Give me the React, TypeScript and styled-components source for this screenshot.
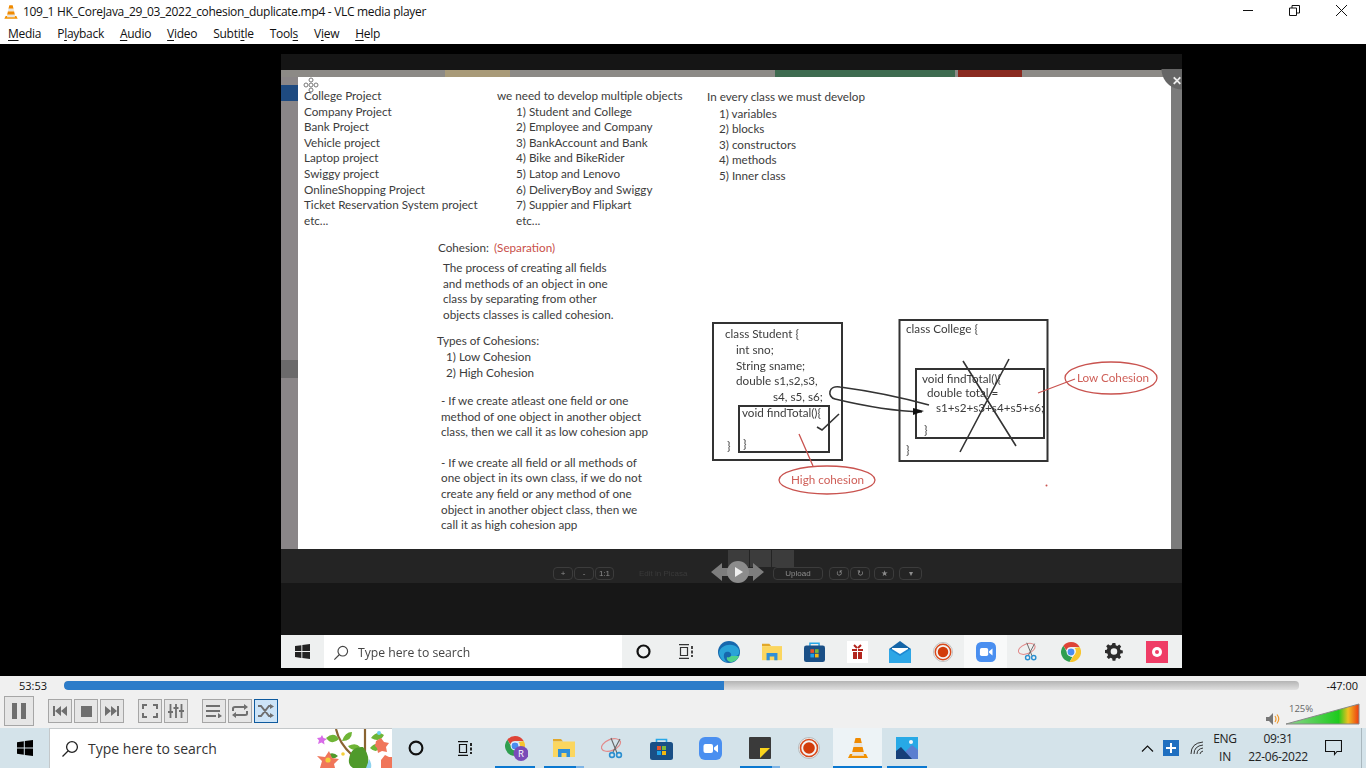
import React from "react";
import styled, { createGlobalStyle } from "styled-components";

const Global = createGlobalStyle`
  html, body { margin: 0; padding: 0; background: #000; }
  body { font-family: "Open Sans", "Noto Sans", sans-serif; overflow: hidden; }
  * { box-sizing: border-box; }
`;

const Page = styled.div`
  width: 1366px; height: 768px; display: flex; flex-direction: column; overflow: hidden;
`;
const TitleBar = styled.div`
  height: 23px; background: #fff; display: flex; align-items: center; padding-left: 3px; flex: none;
`;
const TitleText = styled.span`
  margin-left: 4px; font-size: 12px; color: #111; letter-spacing: -0.31px; white-space: nowrap;
`;
const WinButtons = styled.div`
  margin-left: auto; display: flex; align-items: center; height: 100%; padding-right: 18px; gap: 35px; margin-top: -3px;
`;
const MenuBar = styled.div`
  height: 21px; background: #fff; display: flex; align-items: center; padding-left: 8px; gap: 16px; flex: none;
`;
const MenuItem = styled.span`
  font-size: 12px; color: #111; white-space: nowrap; letter-spacing: -0.28px;
  u { text-underline-offset: 2px; }
`;
const VideoArea = styled.div`
  height: 632px; background: #000; flex: none; padding: 10px 0 0 281px;
`;
const Frame = styled.div`
  width: 901px; height: 614px; background: #171717; display: flex; flex-direction: column;
`;
const FrameTop = styled.div`height: 16px; background: #151515; flex: none;`;
const ShareStrip = styled.div`
  height: 7px; flex: none; display: flex; background: #8c8a86; filter: blur(0.6px);
`;
const ShareSeg = styled.div<{ $w: number; $c: string }>`
  width: ${p => p.$w}px; flex: none; background: ${p => p.$c};
`;
const SlideRow = styled.div`height: 472px; display: flex; flex: none; position: relative;`;
const LeftStrip = styled.div`
  width: 17px; flex: none; background: #8a8688; display: flex; flex-direction: column; filter: blur(0.4px);
`;
const StripBlue = styled.div`height: 16px; margin-top: 8px; background: #1e4a80; flex: none;`;
const StripDark = styled.div`height: 18px; margin-top: 259px; background: #6b6a6b; flex: none;`;
const RightStrip = styled.div`width: 11px; flex: none; background: #7b7b7b;`;
const Corner = styled.div`
  position: absolute; right: 0; top: -8px; width: 22px; height: 32px; color: #eee; font-size: 12px; font-weight: 700;
  background: radial-gradient(circle at 100% 0, #666 0 20px, transparent 21px);
  text-align: right; line-height: 24px; margin-right: 0; overflow: hidden;
`;
const Slide = styled.div`
  width: 873px; flex: none; background: #fff; padding: 11px 0 0 6px; color: #3c3c3c;
  font-family: "Lato", "Open Sans", sans-serif; font-size: 11.7px; line-height: 15.6px;
  filter: blur(0.45px); position: relative; display: flex; flex-direction: column;
`;
const Cursor = styled.svg`position: absolute; left: 5px; top: 0; `;
const TopRow = styled.div`display: flex; flex: none;`;
const Col = styled.div<{ $w: number; $t?: number }>`
  width: ${p => p.$w}px; flex: none; margin-top: ${p => p.$t ?? 0}px;
`;
const Line = styled.div<{ $i?: number }>`
  padding-left: ${p => p.$i ?? 0}px; white-space: nowrap;
`;
const LowerRow = styled.div`display: flex; flex: none; margin-top: 12px;`;
const LowerText = styled.div`margin-left: 134px; width: 262px; flex: none;`;
const Red = styled.span`color: #c9504a; margin-left: 5px;`;
const Para = styled.div<{ $t: number; $i?: number }>`
  margin-top: ${p => p.$t}px; margin-left: ${p => p.$i ?? 0}px;
`;
const Diagram = styled.svg`flex: none; margin-top: 69px; overflow: visible;`;
const DText = styled.text`
  font-family: "Lato", "Open Sans", sans-serif; font-size: 11.7px; fill: #3c3c3c;
`;
const RText = styled(DText)`fill: #cf5f58;`;
const FrameControls = styled.div`
  height: 34px; background: #242424; flex: none; display: flex; align-items: center; padding: 15px 0 0 272px; gap: 1px;
  filter: blur(0.4px);
`;
const Ghost = styled.div<{ $w: number; $m?: number }>`
  width: ${p => p.$w}px; height: 13px; margin-left: ${p => p.$m ?? 0}px; border: 1px solid #3c3c3c; border-radius: 4px; flex: none;
  color: #8d8d8d; font-size: 8px; line-height: 11px; text-align: center; font-family: "Liberation Sans", sans-serif;
  background: #242424; position: relative;
`;
const FaintLabel = styled.span`
  color: #3a3a3a; font-size: 8px; margin-left: 24px; width: 71px; flex: none; font-family: "Liberation Sans", sans-serif;
`;
const Transport = styled.svg`flex: none; align-self: flex-start; margin: -15px 0 0 0;`;
const FrameSpacer = styled.div`height: 52px; background: #171717; flex: none;`;
const InnerTaskbar = styled.div`
  height: 33px; background: #eef0f0; flex: none; display: flex; align-items: center; filter: blur(0.3px);
`;
const InnerStart = styled.div`width: 43px; display: flex; justify-content: center; flex: none;`;
const InnerSearch = styled.div`
  width: 298px; height: 100%; background: #fff; flex: none; display: flex; align-items: center; gap: 9px; padding: 2px 0 0 9px;
  font-size: 12.2px; color: #444; 
`;
const InnerSlot = styled.div<{ $active?: boolean }>`
  width: 42.8px; height: 100%; flex: none; display: flex; align-items: center; justify-content: center;
  background: ${p => (p.$active ? "#f8f9f9" : "transparent")};
`;
const Controls = styled.div`
  height: 52px; background: #f0f0f0; flex: none; display: flex; flex-direction: column;
`;
const SeekRow = styled.div`
  height: 18px; display: flex; align-items: center; flex: none; padding-top: 1px;
`;
const TimeLabel = styled.span<{ $w: number; $end?: boolean }>`
  width: ${p => p.$w}px; flex: none; font-size: 11px; color: #111; white-space: nowrap;
  text-align: ${p => (p.$end ? "right" : "center")}; padding: ${p => (p.$end ? "0 8px 0 0" : "0 0 0 2px")};
`;
const SeekTrack = styled.div`
  width: 1235px; height: 9px; background: linear-gradient(#b4b4b4, #e0e0e0); border-radius: 4px; flex: none; overflow: hidden;
`;
const SeekFill = styled.div`height: 100%; background: #2c7cc9; border-radius: 4px 0 0 4px;`;
const ButtonRow = styled.div`
  height: 34px; flex: none; display: flex; align-items: center; padding-left: 4px; position: relative;
`;
const CtlButton = styled.div<{ $big?: boolean; $on?: boolean; $gap?: number }>`
  width: ${p => (p.$big ? 30 : 24)}px; height: ${p => (p.$big ? 30 : 24)}px; flex: none;
  margin-left: ${p => p.$gap ?? 2}px;
  border: 1px solid ${p => (p.$on ? "#0e5a9e" : "#a6a6a6")};
  background: ${p => (p.$on ? "#cde4f7" : "#e6e6e6")};
  display: flex; align-items: center; justify-content: center;
`;
const Volume = styled.div`
  margin-left: auto; display: flex; align-items: flex-end; gap: 6px; padding-right: 6px; align-self: flex-start; margin-top: 9px;
`;
const Wedge = styled.div`
  position: relative; width: 74px; height: 22px; flex: none;
`;
const WedgeLabel = styled.span`
  position: absolute; left: 3px; top: 0; font-size: 9.5px; color: #666; line-height: 12px;
`;
const Taskbar = styled.div`
  height: 40px; background: #d4e3ea; flex: none; display: flex; align-items: stretch;
`;
const StartCell = styled.div`
  width: 49px; flex: none; display: flex; align-items: center; justify-content: center;
`;
const SearchBox = styled.div`
  width: 343px; flex: none; background: #fff; border: 1px solid #c4c8ca; border-bottom: 0; border-right: 0;
  display: flex; align-items: center; padding-left: 11px; gap: 9px; font-size: 14px; color: #333; position: relative; overflow: hidden;
`;
const SearchArt = styled.svg`position: absolute; right: 0; top: 0;`;
const PlainCell = styled.div<{ $w: number }>`
  width: ${p => p.$w}px; flex: none; display: flex; align-items: center; justify-content: center;
`;
const AppSlot = styled.div<{ $open?: boolean; $active?: boolean; $split?: boolean }>`
  width: 49px; flex: none; display: flex; align-items: center; justify-content: center; position: relative;
  background: ${p => (p.$active ? "#edf3f6" : "transparent")};
  ${p => p.$open ? `&::after { content: ""; position: absolute; bottom: 0; height: 2px;
    left: ${p.$active ? 0 : 5}px; right: ${p.$active ? 0 : 4}px;
    background: ${p.$split ? "linear-gradient(90deg,#0a78d0 80%,#7db4e6 80%)" : "#0a78d0"}; }` : ""}
`;
const Tray = styled.div`
  margin-left: auto; display: flex; align-items: center; flex: none; color: #222; height: 100%;
`;
const TrayCell = styled.div<{ $w: number; $pr?: number }>`
  width: ${p => p.$w}px; flex: none; display: flex; align-items: center; justify-content: center;
  padding-right: ${p => p.$pr ?? 0}px;
`;
const Stack = styled.div<{ $w: number }>`
  width: ${p => p.$w}px; flex: none; display: flex; flex-direction: column; align-items: center; font-size: 12px; line-height: 18px; color: #222;
  letter-spacing: -0.3px;
`;
const Edge = styled.div`width: 5px; height: 100%; border-left: 1px solid #a9b7be; flex: none;`;

const Win = ({ s = 16, c = "#000" }: { s?: number; c?: string }) => (
  <svg width={s} height={s} viewBox="0 0 16 16">
    <path fill={c} d="M0 2.2 6.8 1.2V7.5H0zM7.8 1 16 0V7.5H7.8zM0 8.5H6.8V14.8L0 13.8zM7.8 8.5H16V16L7.8 15z" />
  </svg>
);
const Lens = ({ s = 18, c = "#222" }: { s?: number; c?: string }) => (
  <svg width={s} height={s} viewBox="0 0 18 18" fill="none" stroke={c} strokeWidth="1.3">
    <circle cx="11" cy="7" r="5.4" /><path d="M7 11 1.5 16.5" />
  </svg>
);
const Cone = ({ s = 24 }: { s?: number }) => (
  <svg width={s} height={s} viewBox="0 0 24 24">
    <path fill="#f08a00" d="M9.5 2h5l1.3 5H8.2zM7.4 11h9.2l1.2 5H6.2z" />
    <path fill="#e9e4dc" d="M8.2 7h7.6l.9 4H7.4zM6.2 16h11.6l.9 3.5H5.3z" />
    <path fill="#f29100" d="M4 18h2.4l-.6 1.8h12.4l-.6-1.8H20l2 4H2z" />
  </svg>
);
const Chrome = ({ s = 22 }: { s?: number }) => (
  <svg width={s} height={s} viewBox="0 0 22 22">
    <path fill="#de4437" d="M11 0a11 11 0 0 1 9.5 5.5H11a5.5 5.5 0 0 0-5.2 3.7L2.6 4A11 11 0 0 1 11 0z" />
    <path fill="#2f9e4f" d="M2.6 4 7 11.8a5 5 0 0 0 5.5 4.6L9.4 21.900A11 11 0 0 1 2.600 4z" />
    <path fill="#f7c52e" d="M20.500 5.500A11 11 0 0 1 9.400 21.900L14.500 14A5 5 0 0 0 15 6.500z" />
    <circle cx="11" cy="11" r="4.800" fill="#fff" /><circle cx="11" cy="11" r="3.800" fill="#4a8df0" />
  </svg>
);
const Folder = ({ s = 22 }: { s?: number }) => (
  <svg width={s} height={s} viewBox="0 0 22 22">
    <path fill="#e2a82a" d="M0 2h8l2 2.500H0z" />
    <path fill="#fbd65f" d="M0 4.500h22V20H0z" />
    <path fill="#2f8fd8" d="M5 12h12v8h-3.500v-4h-5v4H5z" />
  </svg>
);
const Snip = ({ s = 24 }: { s?: number }) => (
  <svg width={s} height={s} viewBox="0 0 24 24" fill="none">
    <ellipse cx="10" cy="9" rx="10" ry="5.500" stroke="#e28a8a" strokeWidth="1.200" transform="rotate(-22 10 9)" />
    <path d="M10 2 16 17M19 3 12 16" stroke="#666" strokeWidth="1.100" />
    <circle cx="11" cy="19" r="2.400" stroke="#2b8fd0" strokeWidth="1.600" />
    <circle cx="18" cy="19" r="2.400" stroke="#2b8fd0" strokeWidth="1.600" />
  </svg>
);
const Store = ({ s = 23 }: { s?: number }) => (
  <svg width={s} height={s} viewBox="0 0 23 23">
    <path fill="none" stroke="#27a7e8" strokeWidth="1.600" d="M6.500 6V2.500h10V6" />
    <rect y="5" width="23" height="18" rx="2.500" fill="#1a4f86" />
    <rect x="7" y="9" width="4" height="4" fill="#e8532c" /><rect x="12" y="9" width="4" height="4" fill="#7db83a" />
    <rect x="7" y="14" width="4" height="4" fill="#1ea2e8" /><rect x="12" y="14" width="4" height="4" fill="#f7b90f" />
  </svg>
);
const Zoom = ({ s = 23 }: { s?: number }) => (
  <svg width={s} height={s} viewBox="0 0 23 23">
    <rect width="23" height="23" rx="6" fill="#4a8ff0" />
    <rect x="4.500" y="7" width="9.500" height="9" rx="2" fill="#fff" />
    <path fill="#fff" d="m15 10.500 4-3v8l-4-3z" />
  </svg>
);
const Sticky = () => (
  <svg width="22" height="22" viewBox="0 0 22 22">
    <rect width="22" height="22" rx="1" fill="#3a3a3a" />
    <path fill="#fad41c" d="M11 11h10L11 21z" />
  </svg>
);
const Rec = ({ s = 22 }: { s?: number }) => (
  <svg width={s} height={s} viewBox="0 0 22 22" fill="none">
    <circle cx="11" cy="11" r="10.500" fill="#f3f3f3" stroke="#999" strokeWidth=".6" />
    <circle cx="11" cy="11" r="8.500" stroke="#d84a1c" strokeWidth="1.600" />
    <circle cx="11" cy="11" r="5.800" fill="#d23c0a" />
  </svg>
);
const Photos = () => (
  <svg width="22" height="22" viewBox="0 0 22 22">
    <rect width="22" height="22" fill="#27a9e6" />
    <path fill="#5b7fd0" d="M9 15 16 8l6 5v9H12z" />
    <path fill="#173f78" d="M0 22v-8l5-4 11 12z" />
    <circle cx="15" cy="5" r="2" fill="#f2f7fb" />
  </svg>
);
const Edgy = () => (
  <svg width="22" height="22" viewBox="0 0 22 22">
    <circle cx="11" cy="11" r="11" fill="#1768ad" />
    <path fill="#2aa3d8" d="M1 12C2 4 14 1 20 7c2 3 2 7-2 8h-5c1-3-2-5-5-4-3 1-3 7 1 10-4 0-7-4-8-9z" />
    <path fill="#4fd18c" d="M13 15h8c-1 3-3 5-7 6-3 0-6-2-5-5 1 1 3 0 4-1z" />
  </svg>
);
const Gift = () => (
  <svg width="21" height="22" viewBox="0 0 21 22">
    <rect width="21" height="22" fill="#fff" />
    <path fill="#b3261e" d="M5 8h5v2H5zM11 8h5v2h-5zM6 11h4v7H6zM11 11h4v7h-4z" />
    <path d="M7 4l3 3M14 4l-3 3" stroke="#b3261e" strokeWidth="2" />
  </svg>
);
const Mail = () => (
  <svg width="22" height="22" viewBox="0 0 22 22">
    <path fill="#1565a8" d="M11 0 22 8H0z" />
    <rect y="8" width="22" height="14" fill="#1e88d2" />
    <path fill="#fff" d="M3 7h16v1l-8 5-8-5z" />
    <path fill="#2ea6e6" d="M0 8l11 7 11-7v14H0z" />
  </svg>
);
const Gear = () => (
  <svg width="18" height="18" viewBox="0 0 18 18">
    <path fill="#2c2c2c" fillRule="evenodd" d="M7.500 0h3l.4 2.400 1.700.7 2-1.400 2.100 2.100-1.400 2 .7 1.700 2.400.4v3l-2.400.4-.7 1.700 1.400 2-2.100 2.100-2-1.400-1.700.7-.4 2.400h-3l-.4-2.400-1.700-.7-2 1.400-2.100-2.100 1.400-2-.7-1.700L-1 10.500v-3l2.400-.4.7-1.700-1.400-2L2.800 1.300l2 1.400 1.700-.7zM9 5.500a3.500 3.500 0 1 0 0 7 3.500 3.500 0 0 0 0-7z" transform="translate(.5 0) scale(.94)" />
  </svg>
);
const Pink = () => (
  <svg width="22" height="22" viewBox="0 0 22 22">
    <rect width="22" height="22" fill="#ef3d66" />
    <circle cx="11" cy="11" r="5" fill="#fff" /><circle cx="11" cy="11" r="2" fill="#ef3d66" />
  </svg>
);
const Ring = ({ s = 15, w = 2.200 }: { s?: number; w?: number }) => (
  <svg width={s} height={s} viewBox="0 0 15 15" fill="none" stroke="#111" strokeWidth={w}>
    <circle cx="7.500" cy="7.500" r="6" />
  </svg>
);
const TaskView = ({ c = "#111" }: { c?: string }) => (
  <svg width="16" height="15" viewBox="0 0 16 15" fill="none" stroke={c} strokeWidth="1.200">
    <path d="M1 .6h10M1 14.400h10M2.500 3.500h7v8h-7z" />
    <path d="M14 2v3M14 6.500v3M14 11v2" strokeWidth="1.800" />
  </svg>
);

const G = "#6f6f6f";
const Icons = {
  pause: <svg width="16" height="16" viewBox="0 0 16 16"><path fill={G} d="M1 0h5v16H1zM10 0h5v16h-5z" /></svg>,
  prev: <svg width="16" height="10" viewBox="0 0 16 10"><path fill={G} d="M1 0h2v10H1zM9 0v10L3 5zM15 0v10L9 5z" /></svg>,
  stop: <svg width="11" height="11"><rect width="11" height="11" fill={G} /></svg>,
  next: <svg width="16" height="10" viewBox="0 0 16 10"><path fill={G} d="M1 0v10l6-5zM7 0v10l6-5zM13 0h2v10h-2z" /></svg>,
  full: <svg width="16" height="14" viewBox="0 0 16 14" fill="none" stroke={G} strokeWidth="2"><path d="M1 5V1h4M11 1h4v4M1 9v4h4M11 13h4V9" /></svg>,
  ext: <svg width="16" height="14" viewBox="0 0 16 14" fill="none" stroke={G} strokeWidth="1.800"><path d="M2.500 0v14M8 0v14M13.500 0v14" /><path d="M0 8h5M5.500 4h5M11 7h5" strokeWidth="2.200" /></svg>,
  list: <svg width="16" height="14" viewBox="0 0 16 14"><path fill={G} d="M0 1h14v2H0zM0 6h14v2H0zM0 11h10v2H0zM12 9l4 3-4 2.500z" /></svg>,
  loop: <svg width="16" height="14" viewBox="0 0 16 14" fill="none" stroke={G} strokeWidth="2"><path d="M1 7V4.500Q1 3 3 3h10M15 7v2.500Q15 11 13 11H3" /><path fill={G} stroke="none" d="M12 0l4 3-4 3zM4 8l-4 3 4 3z" /></svg>,
  rnd: <svg width="16" height="14" viewBox="0 0 16 14" fill="none" stroke={G} strokeWidth="2"><path d="M0 2h3l8 10h2M0 12h3l8-10h2" /><path fill={G} stroke="none" d="M12 0l4 2.500L12 5zM12 9l4 2.500L12 14z" /></svg>,
};

const col1 = ["College Project","Company Project","Bank Project","Vehicle project","Laptop project","Swiggy project","OnlineShopping Project","Ticket Reservation System project","etc..."];
const col2 = ["1) Student and College","2) Employee and Company","3) BankAccount and Bank","4) Bike and BikeRider","5) Latop and Lenovo","6) DeliveryBoy and Swiggy","7) Suppier and Flipkart","etc..."];
const col3 = ["1) variables","2) blocks","3) constructors","4) methods","5) Inner class"];

export default function App() {
  return (
    <Page>
      <Global />
      <TitleBar>
        <Cone s={16} />
        <TitleText>109_1 HK_CoreJava_29_03_2022_cohesion_duplicate.mp4 - VLC media player</TitleText>
        <WinButtons>
          <svg width="11" height="11"><path d="M0 5.500h10" stroke="#111" /></svg>
          <svg width="11" height="11" fill="none" stroke="#111"><path d="M.5 3h7v7.500h-7zM3 3V.5h7.500V8H8" /></svg>
          <svg width="13" height="13" fill="none" stroke="#111"><path d="M1 1l11 11M12 1 1 12" /></svg>
        </WinButtons>
      </TitleBar>
      <MenuBar>
        <MenuItem><u>M</u>edia</MenuItem>
        <MenuItem>P<u>l</u>ayback</MenuItem>
        <MenuItem><u>A</u>udio</MenuItem>
        <MenuItem><u>V</u>ideo</MenuItem>
        <MenuItem>Subti<u>t</u>le</MenuItem>
        <MenuItem>Tool<u>s</u></MenuItem>
        <MenuItem>V<u>i</u>ew</MenuItem>
        <MenuItem><u>H</u>elp</MenuItem>
      </MenuBar>
      <VideoArea>
        <Frame>
          <FrameTop />
          <ShareStrip>
            <ShareSeg $w={164} $c="#8c8a86" />
            <ShareSeg $w={65} $c="#a89a78" />
            <ShareSeg $w={265} $c="#8c8a86" />
            <ShareSeg $w={180} $c="#3e6b50" />
            <ShareSeg $w={3} $c="#8c8a86" />
            <ShareSeg $w={64} $c="#8a2a20" />
          </ShareStrip>
          <SlideRow>
            <LeftStrip><StripBlue /><StripDark /></LeftStrip>
            <Slide>
              <Cursor width="16" height="16" viewBox="0 0 16 16" fill="none" stroke="#777" strokeWidth="1">
                <circle cx="8" cy="3" r="2" /><circle cx="8" cy="13" r="2" /><circle cx="3" cy="8" r="2" /><circle cx="13" cy="8" r="2" /><circle cx="8" cy="8" r="2" />
              </Cursor>
              <TopRow>
                <Col $w={193}>{col1.map(t => <Line key={t}>{t}</Line>)}</Col>
                <Col $w={210}>
                  <Line>we need to develop multiple objects</Line>
                  {col2.map(t => <Line key={t} $i={19}>{t}</Line>)}
                </Col>
                <Col $w={300} $t={1}>
                  <Line>In every class we must develop</Line>
                  <Para $t={1}>{col3.map(t => <Line key={t} $i={12}>{t}</Line>)}</Para>
                </Col>
              </TopRow>
              <LowerRow>
                <LowerText>
                  <Line>Cohesion:<Red>(Separation)</Red></Line>
                  <Para $t={4} $i={5}>
                    <Line>The process of creating all fields</Line>
                    <Line>and methods of an object in one</Line>
                    <Line>class by separating from other</Line>
                    <Line>objects classes is called cohesion.</Line>
                  </Para>
                  <Para $t={11} $i={-1}>
                    <Line>Types of Cohesions:</Line>
                    <Line $i={9}>1) Low Cohesion</Line>
                    <Line $i={9}>2) High Cohesion</Line>
                  </Para>
                  <Para $t={13} $i={3}>
                    <Line>- If we create atleast one field or one</Line>
                    <Line>method of one object in another object</Line>
                    <Line>class, then we call it as low cohesion app</Line>
                  </Para>
                  <Para $t={15} $i={3}>
                    <Line>- If we create all field or all methods of</Line>
                    <Line>one object in its own class, if we do not</Line>
                    <Line>create any field or any method of one</Line>
                    <Line>object in another object class, then we</Line>
                    <Line>call it as high cohesion app</Line>
                  </Para>
                </LowerText>
                <Diagram width="480" height="200" viewBox="0 0 480 200">
                  <g fill="none" stroke="#333" strokeWidth="2">
                    <rect x="13" y="14" width="129" height="137" />
                    <rect x="39" y="97" width="90" height="46" />
                    <rect x="199.500" y="11" width="148" height="141" />
                    <rect x="216" y="60" width="128" height="69" />
                  </g>
                  <DText x="25" y="29">class Student {"{"}</DText>
                  <DText x="36" y="45">int sno;</DText>
                  <DText x="36" y="61">String sname;</DText>
                  <DText x="36" y="76">double s1,s2,s3,</DText>
                  <DText x="73" y="92">s4, s5, s6;</DText>
                  <DText x="42" y="108">void findTotal(){"{"}</DText>
                  <DText x="27" y="141">{"}"}</DText>
                  <DText x="43" y="139">{"}"}</DText>
                  <DText x="206" y="24">class College {"{"}</DText>
                  <DText x="222" y="74">void findTotal(){"{"}</DText>
                  <DText x="227" y="88">double total =</DText>
                  <DText x="236" y="103">s1+s2+s3+s4+s5+s6;</DText>
                  <DText x="224" y="125">{"}"}</DText>
                  <DText x="206" y="145">{"}"}</DText>
                  <g fill="none" stroke="#333" strokeWidth="1.600">
                    <path d="M263 52 316 137M309 50 260 143" />
                    <path d="M117 118l5 3 17-16" />
                    <path d="M229 96C200 88 170 82 140 78 128 76 127 88 135 90 160 96 190 102 222 103" />
                  </g>
                  <path d="m213 99 11 3-11 4z" fill="#111" />
                  <g fill="none" stroke="#c9534f" strokeWidth="1.300">
                    <ellipse cx="127" cy="171" rx="48" ry="14" />
                    <ellipse cx="411" cy="69" rx="46" ry="16" />
                    <path d="M99 125l14 32M338 84l37-14" />
                  </g>
                  <RText x="91" y="175">High cohesion</RText>
                  <RText x="377" y="73">Low Cohesion</RText>
                  <circle cx="346.500" cy="176.500" r="1" fill="#c9534f" />
                </Diagram>
              </LowerRow>
            </Slide>
            <RightStrip />
            <Corner>✕</Corner>
          </SlideRow>
          <FrameControls>
            <Ghost $w={20}>+</Ghost>
            <Ghost $w={20}>-</Ghost>
            <Ghost $w={19}>1:1</Ghost>
            <FaintLabel>Edit in Picasa</FaintLabel>
            <Transport width="83" height="34" viewBox="0 0 83 34">
              <rect x="17" y="1" width="21" height="17" fill="#3c3c3c" />
              <rect x="39" y="1" width="21" height="17" fill="#3c3c3c" />
              <rect x="61" y="1" width="22" height="17" fill="#3c3c3c" />
              <path d="M0 23l11-9v5h10v8H11v5zM53 23l-11-9v5H32v8h10v5z" fill="#7d7d7d" />
              <circle cx="27" cy="23" r="11" fill="#8c8c8c" />
              <path d="M24 18l8 5-8 5z" fill="#eee" />
            </Transport>
            <Ghost $w={50} $m={-22}>Upload</Ghost>
            <Ghost $w={20} $m={5}>↺</Ghost>
            <Ghost $w={20}>↻</Ghost>
            <Ghost $w={20} $m={3}>★</Ghost>
            <Ghost $w={23} $m={4}>▾</Ghost>
          </FrameControls>
          <FrameSpacer />
          <InnerTaskbar>
            <InnerStart><Win s={15} c="#222" /></InnerStart>
            <InnerSearch><Lens s={16} c="#444" />Type here to search</InnerSearch>
            <InnerSlot><Ring /></InnerSlot>
            <InnerSlot><TaskView c="#333" /></InnerSlot>
            <InnerSlot><Edgy /></InnerSlot>
            <InnerSlot><Folder s={20} /></InnerSlot>
            <InnerSlot><Store s={21} /></InnerSlot>
            <InnerSlot><Gift /></InnerSlot>
            <InnerSlot><Mail /></InnerSlot>
            <InnerSlot><Rec s={20} /></InnerSlot>
            <InnerSlot $active><Zoom s={20} /></InnerSlot>
            <InnerSlot><Snip s={21} /></InnerSlot>
            <InnerSlot><Chrome s={20} /></InnerSlot>
            <InnerSlot><Gear /></InnerSlot>
            <InnerSlot><Pink /></InnerSlot>
          </InnerTaskbar>
        </Frame>
      </VideoArea>
      <Controls>
        <SeekRow>
          <TimeLabel $w={64}>53:53</TimeLabel>
          <SeekTrack><SeekFill style={{ width: `${(660 / 1235) * 100}%` }} /></SeekTrack>
          <TimeLabel $w={67} $end>-47:00</TimeLabel>
        </SeekRow>
        <ButtonRow>
          <CtlButton $big $gap={0}>{Icons.pause}</CtlButton>
          <CtlButton $gap={14}>{Icons.prev}</CtlButton>
          <CtlButton>{Icons.stop}</CtlButton>
          <CtlButton>{Icons.next}</CtlButton>
          <CtlButton $gap={14}>{Icons.full}</CtlButton>
          <CtlButton>{Icons.ext}</CtlButton>
          <CtlButton $gap={14}>{Icons.list}</CtlButton>
          <CtlButton>{Icons.loop}</CtlButton>
          <CtlButton $on>{Icons.rnd}</CtlButton>
          <Volume>
            <svg width="14" height="12" viewBox="0 0 14 12" fill="none">
              <path fill="#777" d="M0 4h3l4-4v12L3 8H0z" />
              <path d="M9 3q2 3 0 6M11 1.500q3.500 4.500 0 9" stroke="#ef9a2e" strokeWidth="1.200" />
            </svg>
            <Wedge>
              <svg width="74" height="22" viewBox="0 0 74 22">
                <defs>
                  <linearGradient id="vol" x1="0" x2="1">
                    <stop offset="0" stopColor="#8fd48f" /><stop offset=".72" stopColor="#1ecb1e" />
                    <stop offset=".85" stopColor="#f0c020" /><stop offset="1" stopColor="#ee3a10" />
                  </linearGradient>
                </defs>
                <path d="M0 21 73 1v20z" fill="url(#vol)" stroke="#888" strokeWidth="1" />
              </svg>
              <WedgeLabel>125%</WedgeLabel>
            </Wedge>
          </Volume>
        </ButtonRow>
      </Controls>
      <Taskbar>
        <StartCell><Win /></StartCell>
        <SearchBox>
          <Lens />
          Type here to search
          <SearchArt width="79" height="39" viewBox="0 0 79 39">
            <path d="M23 0Q26 14 39 26M52 0V30" stroke="#8a6432" strokeWidth="2.200" fill="none" />
            <path fill="#6fb536" d="M13 9q8-7 13 1-7 7-13-1zM29 12q3-9 10-9 0 9-10 9zM35 17q8-4 12 1-7 6-12-1zM58 9q6-8 13-3-4 8-13 3zM57 19q7-8 10 0-4 6-10 0z" />
            <path fill="#4f9a2b" d="M36 30q2-13 14-12 8 9 4 21H40q-5-3-4-9zM14 26q6-4 11 1-5 5-11-1z" />
            <path fill="#f0765a" d="M7 39l2-7-5-5 8 1 4-6 3 7 7 1-5 5 1 4zM62 17l1-5 5-3 3 4 5 1-3 4 1 5-5-1-4 2-1-5z" />
            <circle cx="15" cy="31" r="2.600" fill="#f4cf3a" />
            <circle cx="30" cy="25" r="1.800" fill="#f4cf3a" />
            <path fill="#d86ce8" d="M9 6l1.500 3 3.500 1-3 2 .5 3.500-3-2-3.500 1.500 1-3.500L4 9l3.500-.5z" />
            <circle cx="66" cy="4" r="2" fill="#6fd3ee" />
            <path fill="#f0765a" d="M68 31l4-5 4 2 3 0v11H68z" />
            <path fill="#8fd3ee" d="M56 30q3 4 2 9h-5q2-5 3-9z" />
          </SearchArt>
        </SearchBox>
        <PlainCell $w={48}><Ring s={16} w={2} /></PlainCell>
        <PlainCell $w={50}><TaskView /></PlainCell>
        <AppSlot $open>
          <svg width="26" height="26" viewBox="0 0 26 26">
            <g transform="translate(3 1)"><Chrome s={20} /></g>
            <circle cx="19" cy="18.500" r="7.500" fill="#7a4bb8" />
            <text x="19" y="22" textAnchor="middle" fontSize="9.500" fill="#fff" fontFamily="Open Sans">R</text>
          </svg>
        </AppSlot>
        <AppSlot $open $split><Folder /></AppSlot>
        <AppSlot><Snip /></AppSlot>
        <AppSlot><Store /></AppSlot>
        <AppSlot><Zoom /></AppSlot>
        <AppSlot $open $split><Sticky /></AppSlot>
        <AppSlot><Rec /></AppSlot>
        <AppSlot $open $active><Cone /></AppSlot>
        <AppSlot $open><Photos /></AppSlot>
        <Tray>
          <TrayCell $w={24}>
            <svg width="13" height="7" fill="none" stroke="#111" strokeWidth="1.200"><path d="M1 6.500 6.500 1 12 6.500" /></svg>
          </TrayCell>
          <TrayCell $w={24}>
            <svg width="16" height="16"><rect width="16" height="16" fill="#1f6fc0" /><path d="M8 3v10M3 8h10" stroke="#fff" strokeWidth="2" /></svg>
          </TrayCell>
          <TrayCell $w={27}>
            <svg width="14" height="14" fill="none" stroke="#333"><path d="M1 13Q1 2 13 1M4 13Q4 5 13 4M7 13Q7 8 13 7M10 13Q10 11 13 10" /></svg>
          </TrayCell>
          <Stack $w={30}><span>ENG</span><span>IN</span></Stack>
          <Stack $w={76}><span>09:31</span><span>22-06-2022</span></Stack>
          <TrayCell $w={45} $pr={10}>
            <svg width="17" height="16" fill="none" stroke="#111" strokeWidth="1.100"><path d="M.5.500h16v11h-4.500l-2.500 3v-3H.5z" /></svg>
          </TrayCell>
          <Edge />
        </Tray>
      </Taskbar>
    </Page>
  );
}
